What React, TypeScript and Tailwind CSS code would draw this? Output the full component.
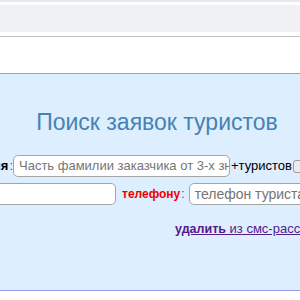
import React from "react";

export default function App() {
  const font = { fontFamily: '"Liberation Sans", Arial, sans-serif' };
  return (
    <div className="w-[300px] h-[300px] overflow-hidden bg-white" style={font}>
      <div className="h-[2px] bg-[#e6e9ee]" />
      <div className="h-[3px] bg-white" />
      <div className="h-[27px] bg-[#f0f1f3]" />
      <div className="h-[4px] bg-white" />
      <div className="h-px bg-[#c4c4c4]" />
      <div className="h-[36px] bg-white" />
      <div className="h-[218px] bg-[#ddeeff] border-y border-[#9999ee] flex flex-col">
        <div className="h-[35px]" />
        <div className="flex justify-center ml-[14px] whitespace-nowrap">
          <h1 className="text-[23px] leading-[26px] text-[#4682b4]">Поиск заявок туристов</h1>
        </div>
        <div className="h-[20px]" />
        <div className="flex items-center h-[22px] whitespace-nowrap">
          <div className="w-[13px] flex justify-end shrink-0">
            <span className="text-[13px] font-bold text-black">
              Фамилия<span className="font-normal text-[#3b5b8c] ml-[1px]">:</span>
            </span>
          </div>
          <div className="w-[217px] h-[22px] shrink-0 rounded-[5px] border border-[#a5a5a5] bg-white pl-[5px] flex items-center overflow-hidden">
            <span className="text-[13px] text-[#757575]">Часть фамилии заказчика от 3-х знаков</span>
          </div>
          <span className="ml-[1px] text-[13px] text-black">+туристов</span>
          <div className="ml-[1px] w-[13px] h-[13px] shrink-0 rounded-[3px] border border-[#9a9a9a] bg-[#ececec]" />
        </div>
        <div className="h-[6px]" />
        <div className="flex items-center h-[22px] whitespace-nowrap">
          <div className="w-[116px] flex justify-end shrink-0">
            <div className="w-[200px] h-[22px] shrink-0 rounded-[5px] border border-[#a5a5a5] bg-white" />
          </div>
          <span className="ml-[6px] text-[12px] font-bold text-[#ee0000]">
            телефону<span className="font-normal text-[#3b5b8c] ml-[1px]">:</span>
          </span>
          <div className="ml-[4px] w-[200px] h-[22px] shrink-0 rounded-[5px] border border-[#a5a5a5] bg-white pl-[5px] flex items-center overflow-hidden">
            <span className="text-[14px] text-[#757575]">телефон туриста</span>
          </div>
        </div>
        <div className="h-[16px]" />
        <div className="flex whitespace-nowrap pl-[175px]">
          <a className="text-[13px] leading-[15px] text-[#551a8b] underline">
            <b className="text-[12.5px]">удалить</b> из смс-рассылки
          </a>
        </div>
      </div>
      <div className="h-[10px] bg-white" />
    </div>
  );
}
